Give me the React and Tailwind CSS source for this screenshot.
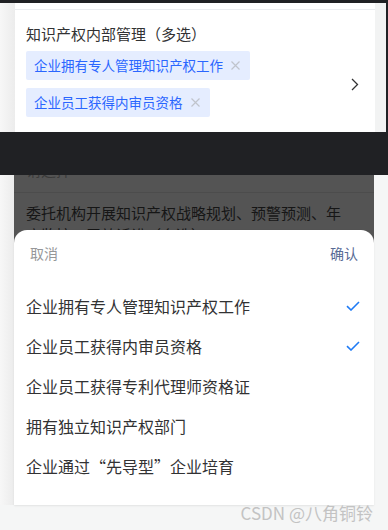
const FONT = { fontFamily: '"Noto Sans CJK SC", "Noto Sans", sans-serif' };

const selected = ["企业拥有专人管理知识产权工作", "企业员工获得内审员资格"];

const options = [
  { label: "企业拥有专人管理知识产权工作", checked: true },
  { label: "企业员工获得内审员资格", checked: true },
  { label: "企业员工获得专利代理师资格证", checked: false },
  { label: "拥有独立知识产权部门", checked: false },
  { label: "企业通过“先导型”企业培育", checked: false },
];

function Chevron() {
  return (
    <svg width="8" height="13" viewBox="0 0 8 13" fill="none">
      <path d="M1 1l5.5 5.5L1 12" stroke="#323233" strokeWidth="1.3" />
    </svg>
  );
}

function Check() {
  return (
    <svg width="14" height="10" viewBox="0 0 14 10" fill="none">
      <path d="M1 5.2l4 3.8L13 1" stroke="#1f7bf5" strokeWidth="1.6" />
    </svg>
  );
}

function Close() {
  return (
    <svg width="9" height="9" viewBox="0 0 9 9" fill="none">
      <path d="M0.5 0.5l8 8M8.5 0.5l-8 8" stroke="#c0c4cc" strokeWidth="1.2" />
    </svg>
  );
}

export default function App() {
  return (
    <div className="w-[388px] h-[530px] overflow-hidden bg-[#f5f6f6] flex flex-col" style={FONT}>
      {/* top strip */}
      <div className="h-[3px] bg-[#202124] shrink-0" />

      {/* selected field card */}
      <div className="flex h-[129px] shrink-0">
        <div className="w-[15px] bg-gradient-to-r from-[#f7f7f7] to-[#ececec]" />
        <div className="w-[360px] bg-white flex flex-col">
          <div className="h-[7px] border-b border-[#ebedf0]" />
          <div className="flex items-center pl-[11px] pr-[16px]">
            <div className="flex-1 flex flex-col">
              <div className="text-[15px] leading-[20px] text-[#323233] mt-[14px]">知识产权内部管理（多选）</div>
              <div className="flex flex-col items-start gap-[8px] mt-[7px]">
                {selected.map((s) => (
                  <div
                    key={s}
                    className="h-[29px] flex items-center gap-[8px] pl-[8px] pr-[10px] bg-[#e5edff] rounded-[2px]"
                  >
                    <span className="text-[13.5px] text-[#2a66ff] leading-none">{s}</span>
                    <Close />
                  </div>
                ))}
              </div>
            </div>
            <div className="mt-[42px]">
              <Chevron />
            </div>
          </div>
        </div>
        <div className="w-[11px] bg-[#f2f3f3]" />
        <div className="w-[2px] bg-[#202124]" />
      </div>

      {/* dark band */}
      <div className="h-[43px] bg-[#202124] shrink-0" />

      {/* dimmed field behind the sheet */}
      <div className="flex h-[55px] shrink-0">
        <div className="w-[14px] bg-gradient-to-r from-[#f7f7f7] to-[#ececec]" />
        <div className="w-[360px] bg-[#545454] overflow-hidden flex flex-col">
          <div className="h-[18px] flex items-end justify-between pb-[15px] pl-[12px] pr-[16px] border-b border-[#4c4c4c]">
            <span className="text-[15px] leading-[15px] text-[#3a3a3a]">请选择</span>
          </div>
          <div className="pt-[9px] pl-[12px] pr-[26px] text-[15px] leading-[22px] text-[#161616]">
            委托机构开展知识产权战略规划、预警预测、年度监控、无效诉讼（多选）
          </div>
        </div>
        <div className="flex-1" />
      </div>

      {/* bottom sheet */}
      <div className="flex h-[275px] shrink-0">
        <div className="w-[14px] bg-gradient-to-r from-[#f7f7f7] to-[#ececec]" />
        <div className="w-[360px] bg-[#545454]">
          <div className="h-full bg-white rounded-t-[13px] shadow-[0_1px_2px_rgba(0,0,0,0.08)] flex flex-col">
            <div className="h-[46px] flex items-center justify-between pl-[16px] pr-[16px] text-[14px]">
              <span className="text-[#969799]">取消</span>
              <span className="text-[#576b95]">确认</span>
            </div>
            <div className="pt-[10px] flex flex-col">
              {options.map((o) => (
                <div key={o.label} className="h-[40px] flex items-center justify-between pl-[12px] pr-[14px]">
                  <span className="text-[16px] text-[#323233]">{o.label}</span>
                  {o.checked && <Check />}
                </div>
              ))}
            </div>
          </div>
        </div>
      </div>

      {/* watermark */}
      <div className="flex justify-end pr-[15px]">
        <span className="text-[17px] leading-[16px] text-[#c3c3c3]">CSDN @八角铜铃</span>
      </div>
    </div>
  );
}
